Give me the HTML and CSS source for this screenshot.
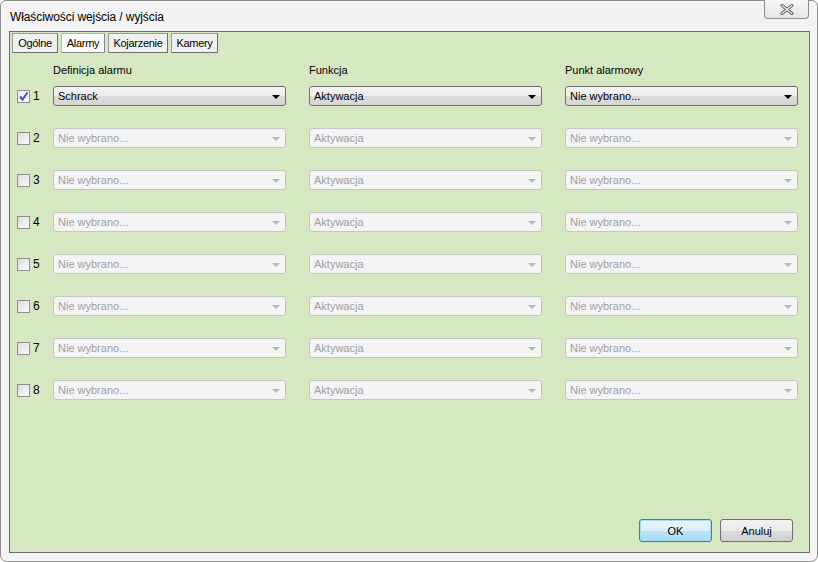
FILE: index.html
```html
<!DOCTYPE html>
<html lang="pl">
<head>
<meta charset="utf-8">
<title>Właściwości wejścia / wyjścia</title>
<link rel="stylesheet" href="styles.css">
</head>
<body>
<div class="window">
  <div class="titlebar">
    <span class="title">Właściwości wejścia / wyjścia</span>
    <div class="close"><svg width="14" height="11" viewBox="0 0 14 11"><path d="M2 1.5 L12 9.5 M12 1.5 L2 9.5" stroke="#5a5a5a" stroke-width="3" stroke-linecap="round"/><path d="M2 1.5 L12 9.5 M12 1.5 L2 9.5" stroke="#f4f4f4" stroke-width="1.2" stroke-linecap="round"/></svg></div>
  </div>
  <div class="panel">
    <div class="tabs">
      <div class="tab t1">Ogólne</div>
      <div class="tab t2 active">Alarmy</div>
      <div class="tab t3">Kojarzenie</div>
      <div class="tab t4">Kamery</div>
    </div>
    <div class="head">
      <div class="lead"></div>
      <div class="hcol">Definicja alarmu</div>
      <div class="hcol">Funkcja</div>
      <div class="hcol">Punkt alarmowy</div>
    </div>
    <div class="rows">
      <div class="row">
        <div class="lead"><span class="cb checked"><svg width="11" height="11" viewBox="0 0 11 11"><path d="M2 5.5 L4.5 8.5 L9.5 1.5" fill="none" stroke="#4a4fb8" stroke-width="2"/></svg></span><span class="num">1</span></div>
        <div class="combo"><span>Schrack</span><i class="arr"></i></div>
        <div class="combo"><span>Aktywacja</span><i class="arr"></i></div>
        <div class="combo"><span>Nie wybrano...</span><i class="arr"></i></div>
      </div>
      <div class="row">
        <div class="lead"><span class="cb"></span><span class="num">2</span></div>
        <div class="combo off"><span>Nie wybrano...</span><i class="arr"></i></div>
        <div class="combo off"><span>Aktywacja</span><i class="arr"></i></div>
        <div class="combo off"><span>Nie wybrano...</span><i class="arr"></i></div>
      </div>
      <div class="row">
        <div class="lead"><span class="cb"></span><span class="num">3</span></div>
        <div class="combo off"><span>Nie wybrano...</span><i class="arr"></i></div>
        <div class="combo off"><span>Aktywacja</span><i class="arr"></i></div>
        <div class="combo off"><span>Nie wybrano...</span><i class="arr"></i></div>
      </div>
      <div class="row">
        <div class="lead"><span class="cb"></span><span class="num">4</span></div>
        <div class="combo off"><span>Nie wybrano...</span><i class="arr"></i></div>
        <div class="combo off"><span>Aktywacja</span><i class="arr"></i></div>
        <div class="combo off"><span>Nie wybrano...</span><i class="arr"></i></div>
      </div>
      <div class="row">
        <div class="lead"><span class="cb"></span><span class="num">5</span></div>
        <div class="combo off"><span>Nie wybrano...</span><i class="arr"></i></div>
        <div class="combo off"><span>Aktywacja</span><i class="arr"></i></div>
        <div class="combo off"><span>Nie wybrano...</span><i class="arr"></i></div>
      </div>
      <div class="row">
        <div class="lead"><span class="cb"></span><span class="num">6</span></div>
        <div class="combo off"><span>Nie wybrano...</span><i class="arr"></i></div>
        <div class="combo off"><span>Aktywacja</span><i class="arr"></i></div>
        <div class="combo off"><span>Nie wybrano...</span><i class="arr"></i></div>
      </div>
      <div class="row">
        <div class="lead"><span class="cb"></span><span class="num">7</span></div>
        <div class="combo off"><span>Nie wybrano...</span><i class="arr"></i></div>
        <div class="combo off"><span>Aktywacja</span><i class="arr"></i></div>
        <div class="combo off"><span>Nie wybrano...</span><i class="arr"></i></div>
      </div>
      <div class="row">
        <div class="lead"><span class="cb"></span><span class="num">8</span></div>
        <div class="combo off"><span>Nie wybrano...</span><i class="arr"></i></div>
        <div class="combo off"><span>Aktywacja</span><i class="arr"></i></div>
        <div class="combo off"><span>Nie wybrano...</span><i class="arr"></i></div>
      </div>
    </div>
    <div class="buttons">
      <div class="btn default">OK</div>
      <div class="btn">Anuluj</div>
    </div>
  </div>
</div>
</body>
</html>
```
FILE: styles.css
```css
html, body {
  margin: 0;
  padding: 0;
  background: #ffffff;
}
body {
  font-family: "Liberation Sans", Arial, sans-serif;
  font-size: 11px;
  color: #000;
}
.window {
  width: 818px;
  height: 562px;
  box-sizing: border-box;
  border: 1px solid #8a8a8a;
  border-radius: 6px 6px 7px 7px;
  background: #f3f3f3;
  box-shadow: inset 0 0 0 1px #fbfbfb;
  display: flex;
  flex-direction: column;
  padding: 0 7px 8px 8px;
}
.titlebar {
  height: 30px;
  display: flex;
  align-items: flex-start;
  justify-content: space-between;
}
.title {
  margin-top: 9px;
  margin-left: 1px;
  font-size: 12px;
  letter-spacing: -0.1px;
}
.close {
  width: 45px;
  height: 19px;
  margin-top: -1px;
  margin-right: 1px;
  box-sizing: border-box;
  border: 1px solid #8c8c8c;
  border-top: none;
  border-radius: 0 0 4px 4px;
  background: linear-gradient(#f6f6f6, #e6e6e6);
  display: flex;
  align-items: center;
  justify-content: center;
}
.panel {
  flex: 1;
  border: 1px solid #6e6e6e;
  background: #d6e8c1;
  display: flex;
  flex-direction: column;
}
.tabs {
  display: flex;
  padding: 1px 0 0 2px;
  gap: 3px;
}
.tab {
  height: 20px;
  flex: none;
  min-width: 0;
  overflow: hidden;
  white-space: nowrap;
  box-sizing: border-box;
  border: 1px solid #9a9a9a;
  border-right-color: #6d6d6d;
  border-bottom-color: #6d6d6d;
  background: #f0f0f0;
  display: flex;
  align-items: center;
  justify-content: center;
  font-size: 11px;
  letter-spacing: -0.3px;
}
.tab.active {
  background: #fbfbfb;
  border-color: #b5b5b5;
  border-right-color: #8a8a8a;
  border-bottom-color: #8a8a8a;
}
.t1 { width: 46px; }
.t2 { width: 44px; }
.t3 { width: 60px; }
.t4 { width: 47px; }
.head {
  display: flex;
  margin-top: 10px;
  height: 14px;
  align-items: center;
}
.lead {
  width: 43px;
  flex: none;
  display: flex;
  align-items: center;
}
.hcol {
  width: 233px;
  margin-right: 23px;
  flex: none;
}
.rows {
  margin-top: 9px;
  display: flex;
  flex-direction: column;
  gap: 22px;
}
.row {
  display: flex;
  height: 20px;
  align-items: center;
}
.row .lead {
  padding-left: 7px;
  box-sizing: border-box;
}
.cb {
  width: 13px;
  height: 13px;
  box-sizing: border-box;
  border: 1px solid #8e8f8f;
  background: linear-gradient(135deg, #dcdcdc, #fbfbfb);
  display: flex;
  align-items: center;
  justify-content: center;
}
.cb.checked {
  background: linear-gradient(135deg, #e8e8ef, #ffffff);
}
.num {
  margin-left: 3px;
  font-size: 12px;
}
.combo {
  width: 233px;
  height: 20px;
  margin-right: 23px;
  flex: none;
  box-sizing: border-box;
  border: 1px solid #707070;
  border-radius: 3px;
  background: linear-gradient(#f4f4f4 0%, #ececec 50%, #dcdcdc 51%, #d6d6d6 100%);
  display: flex;
  align-items: center;
  justify-content: space-between;
  padding: 0 5px 0 4px;
  font-size: 11px;
}
.combo .arr {
  width: 0;
  height: 0;
  border-left: 4px solid transparent;
  border-right: 4px solid transparent;
  border-top: 4px solid #000;
  margin-top: 1px;
}
.combo.off {
  border-color: #c3c6c8;
  background: #f4f4f4;
  color: #a0a0a0;
}
.combo.off .arr {
  border-top-color: #b8b8b8;
}
.buttons {
  margin-top: auto;
  display: flex;
  justify-content: flex-end;
  gap: 8px;
  padding: 0 16px 10px 0;
}
.btn {
  width: 73px;
  height: 23px;
  box-sizing: border-box;
  border: 1px solid #707070;
  border-radius: 3px;
  background: linear-gradient(#f2f2f2 0%, #ebebeb 50%, #dddddd 51%, #cfcfcf 100%);
  display: flex;
  align-items: center;
  justify-content: center;
  font-size: 11px;
}
.btn.default {
  border-color: #3c7fb1;
  box-shadow: inset 0 0 0 1px #9fdcf5;
  background: linear-gradient(#eaf6fd 0%, #d9f0fc 50%, #bee6fd 51%, #a7d9f5 100%);
}
```
